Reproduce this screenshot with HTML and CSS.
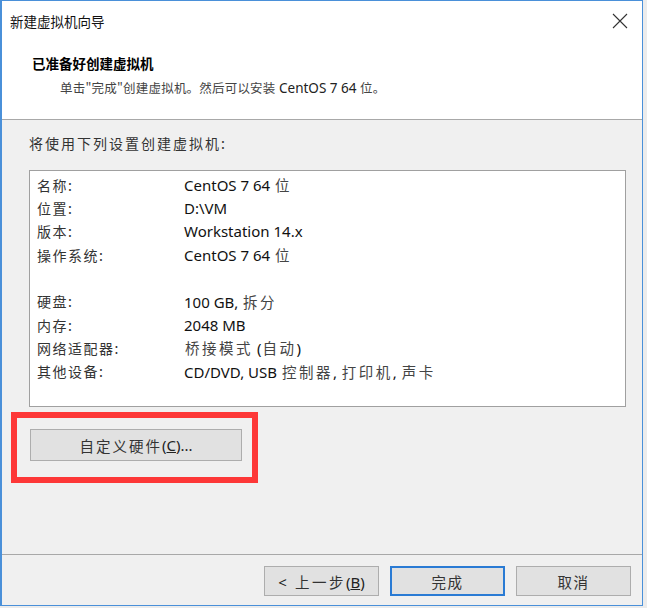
FILE: index.html
```html
<!DOCTYPE html>
<html lang="zh-CN">
<head>
<meta charset="utf-8">
<title>新建虚拟机向导</title>
<link rel="stylesheet" href="styles.css">
</head>
<body>
<div class="window">
  <div class="titlebar">
    <span class="title">新建虚拟机向导</span>
    <svg class="close" width="16" height="16" viewBox="0 0 16 16"><path d="M1 1 L15 15 M15 1 L1 15" stroke="#333" stroke-width="1.1" fill="none"/></svg>
  </div>
  <div class="header">
    <div class="h-title">已准备好创建虚拟机</div>
    <div class="h-sub"><span class="cjk">单击"完成"创建虚拟机。然后可以安装</span> CentOS 7 64 <span class="cjk">位。</span></div>
  </div>
  <div class="content">
    <div class="intro">将使用下列设置创建虚拟机:</div>
    <div class="summary">
      <div class="row"><span class="label">名称:</span><span class="value">CentOS 7 64 <span class="cjk">位</span></span></div>
      <div class="row"><span class="label">位置:</span><span class="value">D:\VM</span></div>
      <div class="row"><span class="label">版本:</span><span class="value">Workstation 14.x</span></div>
      <div class="row"><span class="label">操作系统:</span><span class="value">CentOS 7 64 <span class="cjk">位</span></span></div>
      <div class="row"></div>
      <div class="row"><span class="label">硬盘:</span><span class="value">100 GB, <span class="cjk">拆分</span></span></div>
      <div class="row"><span class="label">内存:</span><span class="value">2048 MB</span></div>
      <div class="row"><span class="label">网络适配器:</span><span class="value"><span class="cjk">桥接模式</span> (<span class="cjk">自动</span>)</span></div>
      <div class="row"><span class="label">其他设备:</span><span class="value">CD/DVD, USB <span class="cjk">控制器</span>, <span class="cjk">打印机</span>, <span class="cjk">声卡</span></span></div>
    </div>
    <div class="highlight">
      <div class="btn custom"><span class="cjk">自定义硬件</span>(<u>C</u>)...</div>
    </div>
  </div>
  <div class="footer">
    <div class="btn"><span><span class="lt">&lt;</span><span class="cjk">上一步</span>(<u>B</u>)</span></div>
    <div class="btn primary"><span class="cjk">完成</span></div>
    <div class="btn"><span class="cjk">取消</span></div>
  </div>
</div>
</body>
</html>
```
FILE: styles.css
```css
html, body {
  margin: 0;
  padding: 0;
}
body {
  background: #ececec;
  width: 647px;
  height: 608px;
  overflow: hidden;
  font-family: "Noto Sans", "Noto Sans CJK SC", sans-serif;
  color: #1a1a1a;
}
.window {
  box-sizing: border-box;
  width: 643px;
  height: 606px;
  border: 1px solid #4a90d9;
  border-left-width: 2px;
  background: #f0f0f0;
  display: flex;
  flex-direction: column;
}
.cjk {
  font-family: "Noto Sans CJK SC", sans-serif;
}
.titlebar {
  height: 39px;
  background: #fff;
  display: flex;
  align-items: center;
  justify-content: space-between;
  padding: 0 14px 0 8px;
}
.title {
  font-family: "Noto Sans CJK SC", sans-serif;
  font-size: 13.5px;
  color: #111;
}
.close {
  display: block;
  margin-top: 1px;
}
.header {
  height: 80px;
  background: #fff;
  border-bottom: 1px solid #a8a8a8;
  box-sizing: border-box;
  padding: 12px 0 0 30px;
}
.h-title {
  font-family: "Noto Sans CJK SC", sans-serif;
  font-weight: bold;
  font-size: 13.5px;
  line-height: 22px;
  color: #000;
}
.h-sub {
  font-size: 13.5px;
  line-height: 22px;
  margin: 3px 0 0 28px;
  color: #222;
}
.h-sub .cjk {
  font-size: 12.5px;
  letter-spacing: 0.2px;
  color: #444;
}
.content {
  flex: 1;
  padding: 12px 0 0 0;
}
.intro {
  font-family: "Noto Sans CJK SC", sans-serif;
  font-size: 14px;
  letter-spacing: 2px;
  line-height: 22px;
  color: #333;
  margin-left: 27px;
}
.summary {
  box-sizing: border-box;
  width: 597px;
  height: 237px;
  margin: 16px 0 0 27px;
  background: #fff;
  border: 1px solid #a0a0a0;
  padding-top: 2px;
}
.row {
  height: 23.33px;
  display: flex;
  align-items: center;
}
.label {
  width: 147px;
  padding-left: 7px;
  font-family: "Noto Sans CJK SC", sans-serif;
  font-size: 14px;
  letter-spacing: 1.5px;
  color: #333;
}
.value {
  font-size: 15px;
  color: #111;
}
.value .cjk {
  font-size: 14.5px;
  letter-spacing: 2.5px;
  padding-left: 1px;
  color: #444;
}
.highlight {
  box-sizing: border-box;
  width: 247px;
  height: 71px;
  margin: 5px 0 0 9px;
  border: 6px solid #fd3737;
  padding: 11px 10px 16px 13px;
}
.btn {
  box-sizing: border-box;
  height: 30px;
  width: 115px;
  background: #e1e1e1;
  border: 1px solid #adadad;
  display: flex;
  align-items: center;
  justify-content: center;
  font-size: 15px;
  color: #222;
}
.btn .cjk {
  font-size: 14.5px;
  letter-spacing: 1.5px;
  color: #333;
}
.btn .lt {
  margin-right: 8px;
}
.footer .btn:first-child .cjk {
  letter-spacing: 2.5px;
}
.btn.custom {
  width: 212px;
  height: 32px;
}
.btn.custom .cjk {
  letter-spacing: 2px;
}
.btn.primary {
  border: 2px solid #2a7bd4;
}
.footer {
  height: 51px;
  border-top: 1px solid #a8a8a8;
  display: flex;
  justify-content: flex-end;
  gap: 11px;
  padding: 11px 11px 0 0;
  box-sizing: border-box;
}
```
